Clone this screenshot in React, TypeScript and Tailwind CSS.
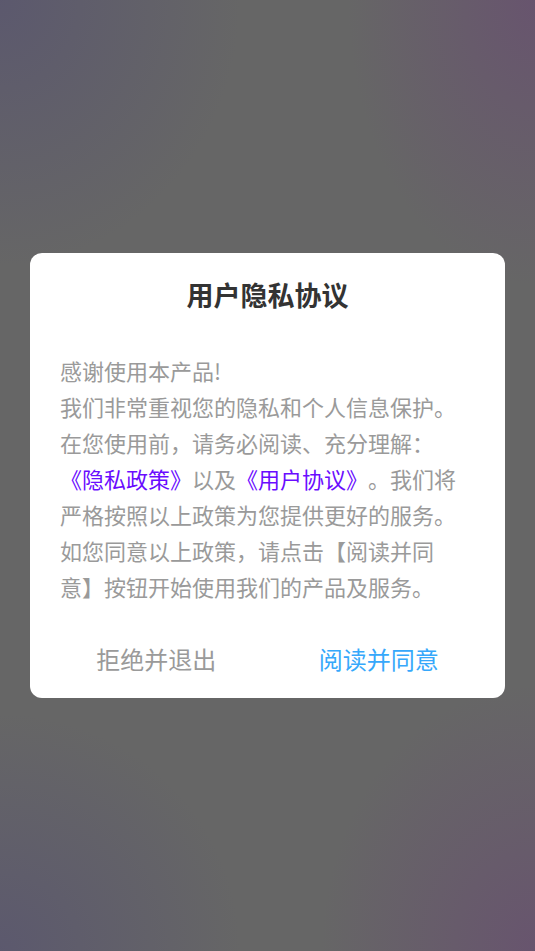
import React from "react";

export default function App() {
  const font = "font-['Noto_Sans_CJK_SC','Noto_Sans',sans-serif]";
  return (
    <div
      className={`min-h-screen w-full flex items-center justify-center bg-[#666666] bg-[image:radial-gradient(ellipse_45%_28%_at_0%_0%,rgba(88,84,112,0.75)_0%,rgba(102,102,102,0)_100%),radial-gradient(ellipse_35%_30%_at_100%_0%,rgba(104,80,112,0.8)_0%,rgba(102,102,102,0)_100%),radial-gradient(ellipse_45%_25%_at_0%_100%,rgba(88,84,112,0.75)_0%,rgba(102,102,102,0)_100%),radial-gradient(ellipse_40%_28%_at_100%_100%,rgba(104,80,112,0.8)_0%,rgba(102,102,102,0)_100%)] [text-spacing-trim:space-all] ${font}`}
    >
      <div className="w-[475px] bg-white rounded-[12px] flex flex-col">
        <div className="pt-[22px] text-center text-[27px] leading-[40px] font-bold text-[#333333]">
          用户隐私协议
        </div>
        <div className="mt-[37px] px-[30px] text-[22px] leading-[36px] text-[#9a9a9a]">
          <div className="whitespace-nowrap">感谢使用本产品!</div>
          <div className="whitespace-nowrap">我们非常重视您的隐私和个人信息保护。</div>
          <div className="whitespace-nowrap">在您使用前，请务必阅读、充分理解：</div>
          <div className="whitespace-nowrap">
            <span className="text-[#6a0cff]">《隐私政策》</span>以及
            <span className="text-[#6a0cff]">《用户协议》</span>。我们将
          </div>
          <div className="whitespace-nowrap">严格按照以上政策为您提供更好的服务。</div>
          <div className="whitespace-nowrap">如您同意以上政策，请点击【阅读并同</div>
          <div className="whitespace-nowrap">意】按钮开始使用我们的产品及服务。</div>
        </div>
        <div className="mt-[27px] pb-[11px] px-[15px] flex">
          <button className="flex-1 h-[56px] flex items-center justify-center text-[24px] text-[#9a9a9a]">
            拒绝并退出
          </button>
          <button className="flex-1 h-[56px] flex items-center justify-center text-[24px] text-[#36a8fb]">
            阅读并同意
          </button>
        </div>
      </div>
    </div>
  );
}
